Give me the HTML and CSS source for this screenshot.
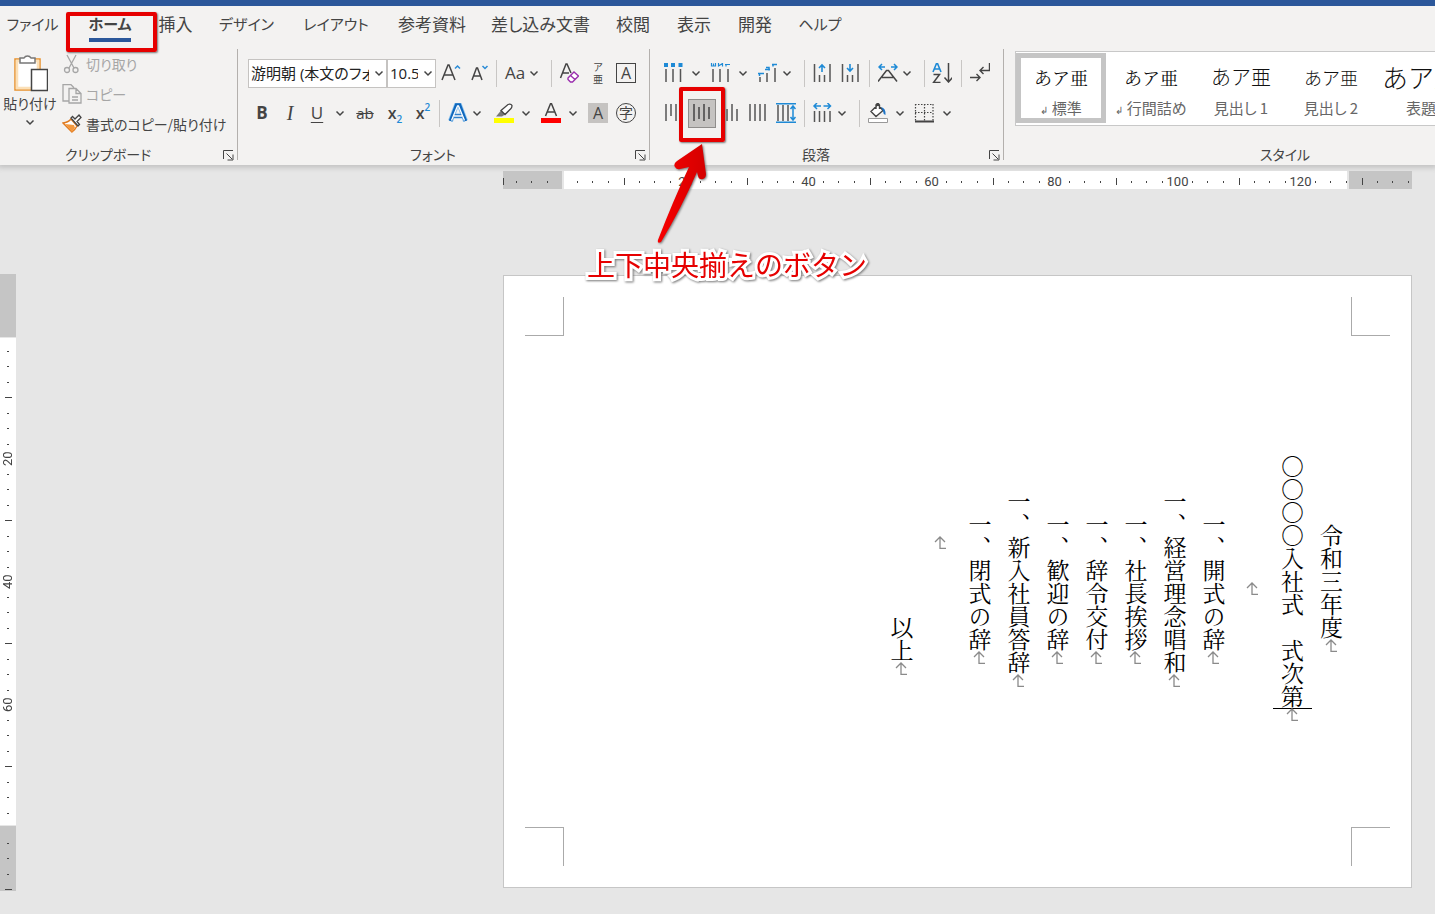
FILE: index.html
```html
<!DOCTYPE html>
<html lang="ja">
<head>
<meta charset="utf-8">
<title>式次第 - 文書</title>
<link rel="stylesheet" href="styles.css">
</head>
<body>
<svg class="defs" aria-hidden="true">
  <symbol id="chev" viewBox="0 0 10 10"><path d="M1.500 3.500 5 7l3.500-3.500" fill="none" stroke="#444" stroke-width="1.500"/></symbol>
  <symbol id="launch" viewBox="0 0 11 11"><path d="M.5 9V.5H10M3.500 3.500 9 9M10 4.500V10H4.500" fill="none" stroke="#444"/></symbol>
  <symbol id="mark" viewBox="0 0 13 13"><path d="M6 1v11.500h6M1 6l5-5 5 5" fill="none" stroke="#8a8a8a" stroke-width="1.300"/></symbol>
</svg>

<header class="ribbon">
  <div class="titlebar"></div>
  <nav class="tabs">
    <button class="tab tab-kana">ファイル</button>
    <button class="tab tab-kana tab-active"><span>ホーム</span></button>
    <button class="tab">挿入</button>
    <button class="tab tab-kana">デザイン</button>
    <button class="tab tab-kana">レイアウト</button>
    <button class="tab">参考資料</button>
    <button class="tab">差し込み文書</button>
    <button class="tab">校閲</button>
    <button class="tab">表示</button>
    <button class="tab">開発</button>
    <button class="tab tab-kana">ヘルプ</button>
  </nav>

  <div class="groups">
    <section class="group group-clip">
      <div class="group-body clip">
        <button class="paste">
          <svg width="36" height="40" viewBox="0 0 36 40"><path d="M3 6h25v31H3z" fill="#fff" stroke="#e8912d" stroke-width="1.500"/><path d="M5 8h21v27H5z" fill="none" stroke="#fbe0b8" stroke-width="2.500"/><path d="M8 10V5h4a4 4 0 0 1 7 0h4v5z" fill="#fff" stroke="#777" stroke-width="1.500"/><path d="M19.500 16.500h16v21h-16z" fill="#fff" stroke="#444" stroke-width="1.500"/></svg>
          <span>貼り付け</span>
          <svg class="chev"><use href="#chev"/></svg>
        </button>
        <div class="clip-list">
          <button class="cmd" disabled><svg width="20" height="20" viewBox="0 0 20 20" fill="none" stroke="#a6a6a6" stroke-width="1.300"><path d="m5 1 7 13M14 1 7 14"/><circle cx="5" cy="16" r="2.500"/><circle cx="13.500" cy="16" r="2.500"/></svg>切り取り</button>
          <button class="cmd" disabled><svg width="20" height="20" viewBox="0 0 20 20" fill="none" stroke="#a6a6a6" stroke-width="1.300"><path d="M7 17H1V.7h8l3 3M7 4.500h7l5 5V19H7zM14 4.500v5h5M10 13h6M10 16h6"/></svg>コピー</button>
          <button class="cmd"><svg width="20" height="20" viewBox="0 0 20 20" fill="none"><path d="M1 9q5-.5 8-4l6 7q-2 4-5 6-4-4-9-9z" fill="#fff" stroke="#e07b20" stroke-width="1.400"/><path d="m3 10 9 1 1 3-3 4z" fill="#f3983e"/><path d="m9 4 7 8 1.500-1.500-2.500-3 4-4L17 1l-4 4-2.500-2.500z" fill="#fff" stroke="#444" stroke-width="1.300"/></svg>書式のコピー/貼り付け</button>
        </div>
      </div>
      <footer class="group-foot"><span>クリップボード</span><button class="launch" aria-label="クリップボードの設定"><svg width="11" height="11"><use href="#launch"/></svg></button></footer>
    </section>

    <section class="group group-font">
      <div class="group-body">
        <div class="tools font-row1">
          <select class="combo" aria-label="フォント"><option>游明朝 (本文のフォント)</option></select>
          <select class="combo combo-size" aria-label="フォント サイズ"><option>10.5</option></select>
          <button class="tool" aria-label="フォント サイズの拡大"><svg viewBox="0 0 20 20"><path d="M1 17 7 2h1l6 15M3.500 12h8" fill="none" stroke="#444" stroke-width="1.500"/><path d="m14 5.500 2.500-2.500L19 5.500" fill="none" stroke="#2b8cd6" stroke-width="1.500"/></svg></button>
          <button class="tool" aria-label="フォント サイズの縮小"><svg viewBox="0 0 20 20"><path d="M2 17 6.500 5h1l4.500 12M4 13h6" fill="none" stroke="#444" stroke-width="1.500"/><path d="m12.500 3 2.500 2.500L17.500 3" fill="none" stroke="#2b8cd6" stroke-width="1.500"/></svg></button>
          <i class="sep"></i>
          <button class="tool tool-case">Aa</button>
          <button class="tool" aria-label="文字種の変換メニュー"><svg class="chev"><use href="#chev"/></svg></button>
          <i class="sep"></i>
          <button class="tool" aria-label="書式のクリア"><svg viewBox="0 0 20 20"><path d="M1.500 15 7 1h1l4 9M4 10h6" fill="none" stroke="#444" stroke-width="1.500"/><path d="m9 15 6-6 4.500 4-6 6h-2L9 16.500zM11.500 12.500l4.500 4" fill="#fff" stroke="#9b2fae" stroke-width="1.400"/></svg></button>
          <button class="tool tool-ruby"><span>ア</span><span>亜</span></button>
          <button class="tool tool-box">A</button>
        </div>
        <div class="tools font-row2">
          <button class="tool t-bold">B</button>
          <button class="tool t-italic">I</button>
          <button class="tool t-under">U</button>
          <button class="tool" aria-label="下線メニュー"><svg class="chev"><use href="#chev"/></svg></button>
          <button class="tool t-strike">ab</button>
          <button class="tool t-x">x<sub>2</sub></button>
          <button class="tool t-x">x<sup>2</sup></button>
          <i class="sep"></i>
          <button class="tool" aria-label="文字の効果"><svg viewBox="0 0 20 20" fill="none"><path d="M2.500 18 8.500 2h3l6 16M6 13h8" stroke="#8cc4f0" stroke-width="5"/><path d="M2.500 18 8.500 2h3l6 16M6 13h8" stroke="#1068bd" stroke-width="3.500"/><path d="M3.500 17.500 9.500 3h1l6 14.500M6 13h8" stroke="#fff" stroke-width="1.300"/></svg></button>
          <button class="tool" aria-label="文字の効果メニュー"><svg class="chev"><use href="#chev"/></svg></button>
          <button class="tool" aria-label="蛍光ペン"><svg viewBox="0 0 20 20"><path d="M0 15h20v5H0z" fill="#ff0"/><path d="m2 13.500 5-6 4 4-3 2z" fill="#777"/><path d="m7 7.500 7-6q3-1 4 1 0 2-1 3l-6 6z" fill="#fff" stroke="#444" stroke-width="1.300"/></svg></button>
          <button class="tool" aria-label="蛍光ペンの色"><svg class="chev"><use href="#chev"/></svg></button>
          <button class="tool" aria-label="フォントの色"><svg viewBox="0 0 20 20"><path d="M0 15h20v5H0z" fill="red"/><path d="M4.500 13 9.500.8h1L15.500 13M6.500 9h7" fill="none" stroke="#444" stroke-width="1.500"/></svg></button>
          <button class="tool" aria-label="フォントの色メニュー"><svg class="chev"><use href="#chev"/></svg></button>
          <button class="tool t-shade">A</button>
          <button class="tool t-circle">字</button>
        </div>
      </div>
      <footer class="group-foot"><span>フォント</span><button class="launch" aria-label="フォントの設定"><svg width="11" height="11"><use href="#launch"/></svg></button></footer>
    </section>

    <section class="group group-para">
      <div class="group-body">
        <div class="tools para-row1">
          <button class="tool" aria-label="箇条書き"><svg viewBox="0 0 20 20"><path d="M0 0h4v4H0zM7 0h4v4H7zM14.500 0h4v4h-4z" fill="#1e8ad6"/><path d="M2 6v13M9 6v13M16.500 6v13" stroke="#555" stroke-width="1.500"/></svg></button>
          <button class="tool" aria-label="箇条書きメニュー"><svg class="chev"><use href="#chev"/></svg></button>
          <button class="tool" aria-label="段落番号"><svg viewBox="0 0 20 20"><path d="M1.500 0v3h4V0M3.500.5v2M8.500 0v3l4-2.500V3.500M15 1.500h5M16 1.500v2" fill="none" stroke="#1e8ad6" stroke-width="1.200"/><path d="M3 6v13M10 6v13M18 6v13" stroke="#555" stroke-width="1.500"/></svg></button>
          <button class="tool" aria-label="段落番号メニュー"><svg class="chev"><use href="#chev"/></svg></button>
          <button class="tool" aria-label="アウトライン"><svg viewBox="0 0 20 20"><path d="M0 10.500h6M1.500 11v2M7 6.500h5M8 4.500h3v3M14 1.500h5M15 1.500v2" fill="none" stroke="#1e8ad6" stroke-width="1.500"/><path d="M2 14v5M9 10v9M17 5v14" stroke="#555" stroke-width="1.500"/></svg></button>
          <button class="tool" aria-label="アウトラインメニュー"><svg class="chev"><use href="#chev"/></svg></button>
          <i class="sep"></i>
          <button class="tool" aria-label="インデントを減らす"><svg viewBox="0 0 20 20"><path d="M2.500 1v18M7.500 12v7M12.500 12v7M18 1v18" stroke="#555" stroke-width="1.500"/><path d="M10 9V2M7 5l3-3 3 3" fill="none" stroke="#1e8ad6" stroke-width="1.600"/></svg></button>
          <button class="tool" aria-label="インデントを増やす"><svg viewBox="0 0 20 20"><path d="M2.500 1v18M7.500 12v7M12.500 12v7M18 1v18" stroke="#555" stroke-width="1.500"/><path d="M10 1v7M7 5l3 3 3-3" fill="none" stroke="#1e8ad6" stroke-width="1.600"/></svg></button>
          <i class="sep"></i>
          <button class="tool" aria-label="拡張書式"><svg viewBox="0 0 20 20" fill="none"><path d="m0 18.500 8.500-11h2l8.500 11M4 14.500h11.500" stroke="#444" stroke-width="1.500"/><path d="M7 4H1M4 1 1 4l3 3M13 4h6M16 1l3 3-3 3" stroke="#1e8ad6" stroke-width="1.500"/></svg></button>
          <button class="tool" aria-label="拡張書式メニュー"><svg class="chev"><use href="#chev"/></svg></button>
          <i class="sep"></i>
          <button class="tool" aria-label="並べ替え"><svg viewBox="0 0 20 20" fill="none"><path d="M1 9 4.500.5h1L9 9M2.500 6h5" stroke="#1e8ad6" stroke-width="1.600"/><path d="M1.500 11.500h6l-6 8h7M16.500 0v18.500M12.500 14.500l4 4.500 4-4.500" stroke="#444" stroke-width="1.500"/></svg></button>
          <i class="sep"></i>
          <button class="tool" aria-label="編集記号の表示"><svg viewBox="0 0 20 20" fill="none" stroke="#444" stroke-width="1.400"><path d="M19.500 0v7.500H10M13.500 4 10 7.500l3.500 3.500M0 14.500h10M6.500 11l3.500 3.500L6.500 18"/></svg></button>
        </div>
        <div class="tools para-row2">
          <button class="tool" aria-label="上揃え"><svg viewBox="0 0 20 20"><path d="M2 1v17M7 1v12M12 1v17" stroke="#555" stroke-width="1.500"/></svg></button>
          <button class="tool tool-selected" aria-label="上下中央揃え"><svg viewBox="0 0 20 20"><path d="M2 1v17M7 4v12M12 1v17M17 4v12" stroke="#444" stroke-width="1.500"/></svg></button>
          <button class="tool" aria-label="下揃え"><svg viewBox="0 0 20 20"><path d="M2 1v17M7 6v12M12 1v17M17 6v12" stroke="#555" stroke-width="1.500"/></svg></button>
          <button class="tool" aria-label="両端揃え"><svg viewBox="0 0 20 20"><path d="M3 1v17M8 1v17M13 1v17M18 1v17" stroke="#555" stroke-width="1.500"/></svg></button>
          <button class="tool" aria-label="均等割り付け"><svg viewBox="0 0 20 20" fill="none"><path d="M2 2v16M7 2v16M12 2v16" stroke="#555" stroke-width="1.500"/><path d="M0 .8h20M0 19.200h20M17 3v14M14.500 6 17 3l2.500 3M14.500 14l2.500 3 2.500-3" stroke="#1e8ad6" stroke-width="1.500"/></svg></button>
          <i class="sep"></i>
          <button class="tool" aria-label="行間"><svg viewBox="0 0 20 20" fill="none"><path d="M2.500 8v11M7.500 8v11M12.500 8v11M18 8v11" stroke="#555" stroke-width="1.500"/><path d="M9 3H2M5 0 2 3l3 3M11.500 3h7M15.500 0l3 3-3 3" stroke="#1e8ad6" stroke-width="1.500"/></svg></button>
          <button class="tool" aria-label="行間メニュー"><svg class="chev"><use href="#chev"/></svg></button>
          <i class="sep"></i>
          <button class="tool" aria-label="塗りつぶし"><svg viewBox="0 0 20 20"><path d="m3 8.500 7-7 5 6-7 6zM8 6V2q2-3 3.500 0v4" fill="#fff" stroke="#444" stroke-width="1.400"/><path d="M13 4q5 1 4.500 8Q15 11 15 8z" fill="#1e74c6"/><path d="M.5 15.500h19v4H.5z" fill="#fff" stroke="#999"/></svg></button>
          <button class="tool" aria-label="塗りつぶしメニュー"><svg class="chev"><use href="#chev"/></svg></button>
          <button class="tool" aria-label="罫線"><svg viewBox="0 0 20 20"><path d="M1.500 1v17M10.500 1v17M19 1v17M1 1.500h18M1 9.500h18" fill="none" stroke="#444" stroke-width="1.200" stroke-dasharray="1.500 1.500"/><path d="M1 18.500h19" stroke="#444" stroke-width="2"/></svg></button>
          <button class="tool" aria-label="罫線メニュー"><svg class="chev"><use href="#chev"/></svg></button>
        </div>
      </div>
      <footer class="group-foot"><span>段落</span><button class="launch" aria-label="段落の設定"><svg width="11" height="11"><use href="#launch"/></svg></button></footer>
    </section>

    <section class="group group-styles">
      <div class="gallery">
        <button class="style style-active"><span class="sample">あア亜</span><span class="name"><small>↲</small> 標準</span></button>
        <button class="style"><span class="sample">あア亜</span><span class="name"><small>↲</small> 行間詰め</span></button>
        <button class="style"><span class="sample sample-h1">あア亜</span><span class="name">見出し 1</span></button>
        <button class="style"><span class="sample sample-h2">あア亜</span><span class="name">見出し 2</span></button>
        <button class="style"><span class="sample sample-title">あア亜</span><span class="name">表題</span></button>
      </div>
      <footer class="group-foot"><span>スタイル</span></footer>
    </section>
  </div>
</header>

<main class="workspace">
  <div class="vruler">
    <div class="v-dark v-top"></div>
    <div class="v-light"><span>20</span><span>40</span><span>60</span></div>
    <div class="v-dark v-bottom"></div>
    <svg class="v-ticks"><defs><pattern id="vt" y="62" width="16" height="123" patternUnits="userSpaceOnUse"><path d="M7 15.500h2M7 30.500h2M7 46.500h2M5 61.500h7M7 77.500h2M7 92.500h2M7 108.500h2" stroke="#444"/></pattern></defs><rect y="65" width="16" height="552" fill="url(#vt)"/></svg>
  </div>
  <div class="canvas">
    <div class="hruler">
      <div class="h-dark"></div>
      <div class="h-light"><span>20</span><span>40</span><span>60</span><span>80</span><span>100</span><span>120</span></div>
      <div class="h-dark h-right"></div>
      <svg class="h-ticks"><defs><pattern id="ht" x="59" width="123" height="18" patternUnits="userSpaceOnUse"><path d="M15.500 10v2M30.500 10v2M46.500 10v2M62.500 7v7M77.500 10v2M92.500 10v2M108.500 10v2" stroke="#444"/></pattern></defs><path d="M.5 7v7" stroke="#444"/><rect width="100%" height="18" fill="url(#ht)"/></svg>
    </div>
    <article class="page">
      <div class="corners"><i class="corner c-tl"></i><i class="corner c-tr"></i></div>
      <div class="text">
        <p>令和三年度<svg class="mark"><use href="#mark"/></svg></p>
        <p>○○○○入社式　式次第<i class="caret"></i><svg class="mark"><use href="#mark"/></svg></p>
        <p><svg class="mark"><use href="#mark"/></svg></p>
        <p>一、開式の辞<svg class="mark"><use href="#mark"/></svg></p>
        <p>一、経営理念唱和<svg class="mark"><use href="#mark"/></svg></p>
        <p>一、社長挨拶<svg class="mark"><use href="#mark"/></svg></p>
        <p>一、辞令交付<svg class="mark"><use href="#mark"/></svg></p>
        <p>一、歓迎の辞<svg class="mark"><use href="#mark"/></svg></p>
        <p>一、新入社員答辞<svg class="mark"><use href="#mark"/></svg></p>
        <p>一、閉式の辞<svg class="mark"><use href="#mark"/></svg></p>
        <p><svg class="mark"><use href="#mark"/></svg>　　　　</p>
        <p>　　　　　以上<svg class="mark"><use href="#mark"/></svg></p>
      </div>
      <div class="corners"><i class="corner c-bl"></i><i class="corner c-br"></i></div>
    </article>
  </div>
</main>

<div class="frame frame-tab"></div>
<div class="frame frame-button"></div>
<svg class="arrow" viewBox="0 0 60 106"><defs><linearGradient id="red"><stop offset="0" stop-color="#f80000"/><stop offset="1" stop-color="#d40000"/></linearGradient></defs><path d="M51 3 26 20q-4 3-2 6 2 3 5 2l9-2Q22 60 7 99q-1 4 3 2Q30 68 46 31l1 4q1 4 5 3 3-1 3-5z" fill="url(#red)"/></svg>
<p class="callout">上下中央揃えのボタン</p>
</body>
</html>
```
FILE: styles.css
```css
* { box-sizing: border-box; }

body {
  margin: 0;
  min-height: 100vh;
  position: relative;
  overflow: hidden;
  display: flex;
  flex-direction: column;
  background: #e6e6e6;
  color: #444;
  font: 14px/20px "Noto Sans CJK JP", sans-serif;
  font-feature-settings: "palt";
}

button {
  border: 0;
  margin: 0;
  padding: 0;
  background: none;
  color: inherit;
  font: inherit;
  font-feature-settings: inherit;
  white-space: nowrap;
}

svg { display: block; flex: none; }
.defs { position: absolute; width: 0; height: 0; }
.chev { width: 10px; height: 10px; }

/* Ribbon */
.ribbon {
  position: relative;
  background: #f3f2f1;
  box-shadow: 0 1px 5px 2px #c4c4c4;
}
.titlebar { height: 6px; background: #2b579a; }

.tabs {
  display: grid;
  grid-template-columns: 65px 90px 41px 101px 78px 114px 103px 82px 40px 82px 48px;
  height: 43px;
}
.tab {
  display: flex;
  justify-content: center;
  align-items: center;
  font-size: 17px;
  padding-bottom: 7px;
}
.tab-kana { font-size: 15px; }
.tab-active { font-weight: 700; padding: 0; align-items: flex-start; }
.tab-active span { height: 36px; line-height: 36px; border-bottom: 4px solid #2b579a; }

.groups { display: flex; overflow: hidden; }
.group {
  flex: none;
  height: 116px;
  display: flex;
  flex-direction: column;
  background: linear-gradient(#b3b0ad, #b3b0ad) right top / 1px 111px no-repeat;
}
.group-clip { width: 238px; }
.group-font { width: 412px; }
.group-para { width: 354px; }
.group-styles { width: 562px; background: none; }
.group-body { flex: 1; padding-top: 4px; }
.group-foot { display: flex; align-items: center; height: 23px; }
.group-foot span { flex: 1; text-align: center; }
.launch { width: 22px; height: 16px; padding: 3px 4px 0 7px; }

/* Clipboard */
.clip { display: flex; }
.paste { width: 60px; display: flex; flex-direction: column; align-items: center; }
.paste .chev { margin-top: 4px; }
.clip-list { display: flex; flex-direction: column; margin-top: -4px; }
.cmd { display: flex; align-items: center; gap: 4px; height: 30px; padding-left: 2px; }
.cmd:disabled { color: #a6a6a6; }

/* Tool rows */
.tools { display: grid; align-items: center; height: 40px; }
.font-row1 { margin-left: 10px; grid-template-columns: 139px 54px 29px 26px 9px 24px 22px 8px 29px 28px 22px; }
.font-row2 { margin-left: 14px; grid-template-columns: 28px 27px 28px 20px 30px 28px 26px 9px 24px 22px 27px 20px 27px 20px 28px 22px; }
.para-row1 { margin-left: 14px; grid-template-columns: 27px 19px 28px 20px 24px 22px 8px 28px 29px 9px 24px 22px 8px 29px 9px 24px; }
.para-row2 { margin-left: 14px; grid-template-columns: 24px 32px 27px 29px 28px 8px 25px 22px 9px 27px 19px 28px 20px; }
.sep { width: 1px; height: 27px; background: #c8c6c4; }

.tool {
  display: flex;
  align-items: center;
  justify-content: center;
  justify-self: start;
  min-width: 10px;
  height: 28px;
  font-family: "Open Sans", "Noto Sans CJK JP", sans-serif;
}
.tool svg:not(.chev) { width: 20px; height: 20px; }
.tool-selected { width: 28px; height: 29px; background: #c5c3c1; border: 1px solid #8f8d8b; }
.tool-case { font-size: 17px; }
.tool-ruby { width: 20px; flex-direction: column; font-size: 10px; line-height: 12px; font-family: "Noto Sans CJK JP", sans-serif; }
.tool-box { width: 20px; height: 20px; border: 1px solid #444; font-size: 16px; }
.t-bold, .t-italic, .t-under, .t-x, .t-strike { width: 20px; font-size: 17px; }
.t-bold { font-weight: 700; }
.t-italic { font-family: "Liberation Serif", serif; font-style: italic; font-size: 20px; }
.t-under { text-decoration: underline; text-underline-offset: 3px; }
.t-strike { text-decoration: line-through; font-size: 15px; }
.t-x { font-weight: 600; font-size: 16px; }
.t-x sub, .t-x sup { font-size: 10px; line-height: 16px; color: #1e8ad6; }
.t-x sub { align-self: flex-end; }
.t-x sup { align-self: flex-start; }
.t-shade { width: 20px; height: 20px; background: #c5c3c1; font-size: 16px; }
.t-circle { width: 20px; height: 20px; border: 1px solid #444; border-radius: 50%; font-size: 14px; }

.combo {
  appearance: none;
  width: 139px;
  height: 29px;
  border: 1px solid #c5c3c1;
  border-radius: 0;
  margin: 0;
  padding: 0 17px 0 2px;
  color: #222;
  font: 15px/20px "Open Sans", "Noto Sans CJK JP", sans-serif;
  font-feature-settings: "palt";
  background: #fff url("data:image/svg+xml,%3Csvg xmlns='http://www.w3.org/2000/svg' width='10' height='10'%3E%3Cpath d='M1.500 3.500 5 7l3.500-3.500' fill='none' stroke='%23444' stroke-width='1.500'/%3E%3C/svg%3E") right 2px center no-repeat;
}
.combo-size { width: 49px; }

/* Style gallery */
.gallery {
  flex: none;
  display: grid;
  grid-template-columns: repeat(5, 90px) 1fr;
  height: 75px;
  margin: 2px 0 16px 11px;
  padding: 1px 0 2px;
  border: 1px solid #c8c8c8;
  background: #fff;
}
.style {
  display: flex;
  flex-direction: column;
  align-items: center;
  height: 70px;
  border: 5px solid transparent;
  color: #666;
}
.style-active { border-color: #c5c5c5; }
.name { font-size: 15px; line-height: 24px; }
.name small { font-size: 10px; }
.sample {
  height: 38px;
  font: 400 18px/38px "Noto Serif CJK JP", "Noto Sans CJK JP", serif;
  color: #111;
  font-feature-settings: normal;
}
.sample-h1, .sample-h2 { font-family: "Noto Sans CJK JP", sans-serif; font-weight: 200; }
.sample-h1 { font-size: 20px; }
.sample-title { font-family: "Noto Sans CJK JP", sans-serif; font-weight: 200; font-size: 26px; }

/* Workspace */
.workspace { flex: 1; display: grid; grid-template-columns: 16px minmax(0, 1fr); }

.vruler { position: relative; margin-top: 109px; }
.v-dark { background: #c5c5c5; }
.v-top { height: 63px; margin-bottom: 1px; }
.v-light { height: 487px; background: #fff; padding-top: 59px; }
.v-light span {
  display: grid;
  place-items: center;
  width: 16px;
  height: 123px;
  writing-mode: vertical-rl;
  transform: rotate(180deg);
  font: 13px/16px Roboto, sans-serif;
}
.v-bottom { height: 65px; margin-top: 1px; }
.v-ticks { position: absolute; left: 0; top: 0; width: 16px; height: 617px; }

.canvas { padding: 6px 23px 0 487px; }
.hruler { position: relative; display: flex; gap: 2px; height: 18px; }
.h-dark { width: 59px; background: #c5c5c5; }
.h-right { width: 63px; }
.h-light { flex: 1; display: flex; padding-left: 60px; background: #fff; overflow: hidden; }
.h-light span { flex: none; width: 123px; text-align: center; font: 13px/21px Roboto, sans-serif; }
.h-ticks { position: absolute; left: 0; top: 0; width: 100%; height: 18px; }

.page {
  margin-top: 86px;
  padding: 21px;
  border: 1px solid #c6c6c6;
  background: #fff;
}
.corners { display: flex; justify-content: space-between; }
.corner { width: 39px; height: 39px; border: 0 solid #aaa; }
.c-tl { border-width: 0 1px 1px 0; }
.c-tr { border-width: 0 0 1px 1px; }
.c-bl { border-width: 1px 1px 0 0; }
.c-br { border-width: 1px 0 0 1px; }

.text {
  writing-mode: vertical-rl;
  width: 100%;
  height: 491px;
  padding: 0 39px;
  color: #000;
  font: 400 23px/39px "Noto Serif CJK JP", "Noto Sans CJK JP", serif;
  font-feature-settings: normal;
  text-align: center;
}
.text p { margin: 0; white-space: pre; }
.mark { display: inline-block; width: 13px; height: 13px; margin-bottom: -13px; }
.caret { display: inline-block; width: 39px; height: 1px; margin-bottom: -1px; background: #000; }

/* Annotations over the window */
.frame { position: absolute; border: 4px solid #e60000; border-radius: 2px; box-shadow: 1px 1px 2px #777; }
.frame-tab { left: 66px; top: 12px; width: 91px; height: 40px; }
.frame-button { left: 679px; top: 87px; width: 46px; height: 55px; }
.arrow { position: absolute; left: 651px; top: 141px; width: 60px; height: 106px; filter: drop-shadow(1px 1px 1px #777); }
.callout {
  position: absolute;
  left: 587px;
  top: 244px;
  margin: 0;
  color: #e60000;
  font-size: 28px;
  line-height: 40px;
  font-weight: 400;
  font-feature-settings: normal;
  -webkit-text-stroke: 6px #fff;
  paint-order: stroke fill;
  filter: drop-shadow(1px 1px 1px #777);
  white-space: nowrap;
}
```
